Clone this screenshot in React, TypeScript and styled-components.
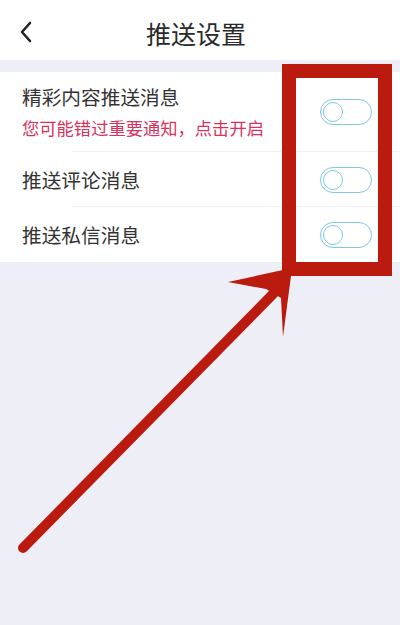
import React from "react";
import styled, { createGlobalStyle } from "styled-components";

const GlobalStyle = createGlobalStyle`
    html, body {
        margin: 0;
        padding: 0;
        background: #eeeff6;
    }
    * {
        box-sizing: border-box;
    }
`;

const Screen = styled.div`
    position: relative;
    width: 400px;
    height: 625px;
    background: #eeeff6;
    font-family: "Noto Sans CJK SC", "Noto Sans", sans-serif;
    overflow: hidden;
`;

const Header = styled.div`
    display: flex;
    align-items: center;
    justify-content: center;
    position: relative;
    height: 60px;
    background: #ffffff;
`;

const BackButton = styled.div`
    position: absolute;
    left: 14px;
    top: 18px;
    width: 24px;
    height: 28px;
    display: flex;
    align-items: center;
    justify-content: center;
`;

const Title = styled.h1`
    margin: 6px 8px 0 0;
    font-size: 25px;
    font-weight: 400;
    color: #2a2a2a;
    line-height: 1;
`;

const List = styled.div`
    margin-top: 12px;
    background: #ffffff;
`;

const Row = styled.div<{ tall?: boolean; divider?: boolean }>`
    display: flex;
    align-items: center;
    justify-content: space-between;
    height: ${({ tall }) => (tall ? "80px" : "55px")};
    padding: 0 28px 0 22px;
    position: relative;
    &::after {
        content: "";
        display: ${({ divider }) => (divider ? "block" : "none")};
        position: absolute;
        left: 72px;
        right: 0;
        bottom: 0;
        height: 1px;
        background: #f0f0f3;
    }
`;

const Labels = styled.div`
    display: flex;
    flex-direction: column;
    gap: 8px;
`;

const Label = styled.span`
    font-size: 19.7px;
    color: #333333;
    line-height: 24px;
`;

const Hint = styled.span`
    font-size: 17.3px;
    color: #d8325c;
    line-height: 22px;
`;

const Toggle = styled.div`
    width: 52px;
    height: 26px;
    border: 1.5px solid #7fc6e8;
    border-radius: 13px;
    display: flex;
    align-items: center;
    padding-left: 2px;
`;

const Knob = styled.div`
    width: 20px;
    height: 20px;
    border-radius: 50%;
    border: 1.5px solid #7fc6e8;
    background: #ffffff;
`;

const Overlay = styled.svg`
    position: absolute;
    left: 0;
    top: 0;
    width: 400px;
    height: 625px;
    pointer-events: none;
`;

const RED = "#bb1b0f";

const App: React.FC = () => {
    return (
        <>
            <GlobalStyle />
            <Screen>
                <Header>
                    <BackButton>
                        <svg width="14" height="22" viewBox="0 0 14 22">
                            <path
                                d="M11 2 L3 11 L11 20"
                                fill="none"
                                stroke="#222"
                                strokeWidth="2.6"
                                strokeLinecap="round"
                                strokeLinejoin="round"
                            />
                        </svg>
                    </BackButton>
                    <Title>推送设置</Title>
                </Header>

                <List>
                    <Row tall divider>
                        <Labels>
                            <Label>精彩内容推送消息</Label>
                            <Hint>您可能错过重要通知，点击开启</Hint>
                        </Labels>
                        <Toggle>
                            <Knob />
                        </Toggle>
                    </Row>
                    <Row divider>
                        <Label>推送评论消息</Label>
                        <Toggle>
                            <Knob />
                        </Toggle>
                    </Row>
                    <Row>
                        <Label>推送私信消息</Label>
                        <Toggle>
                            <Knob />
                        </Toggle>
                    </Row>
                </List>

                {/* annotation drawn over the screenshot */}
                <Overlay viewBox="0 0 400 625">
                    <line
                        x1="23"
                        y1="548"
                        x2="274"
                        y2="293"
                        stroke={RED}
                        strokeWidth="10"
                        strokeLinecap="round"
                    />
                    <polygon
                        points="292,268 228,282 266,289 281,298 283,337"
                        fill={RED}
                    />
                    <rect
                        x="289"
                        y="71"
                        width="96"
                        height="198"
                        fill="none"
                        stroke={RED}
                        strokeWidth="14"
                    />
                </Overlay>
            </Screen>
        </>
    );
};

export default App;
